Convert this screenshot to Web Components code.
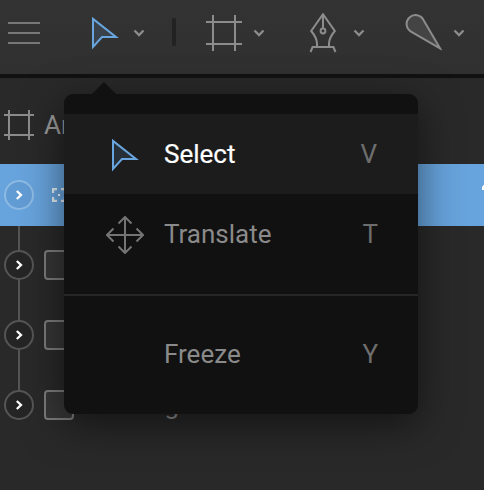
<!DOCTYPE html>
<html lang="en">
<head>
<meta charset="utf-8">
<title>Tools</title>
<style>
html,body{margin:0;height:100%;overflow:hidden;background:#292929}
body{font-family:Roboto,"Liberation Sans",sans-serif;font-size:26px;color:#8d8d8d}
</style>
</head>
<body>
<design-editor></design-editor>
<script>
const icons = {
  menu: [32, 36, '<path d="M0 8H32M0 18H32M0 28H32" stroke="#777"/>'],
  cursor: [28, 36, '<path d="M2 3.9V32L11 22H25Z" fill="#69a5de" fill-opacity=".15" stroke="#69a5de"/>'],
  artboard: [36, 36, '<path d="M7 0V36M29 0V36M0 7H36M0 29H36"/>'],
  smallboard: [30, 30, '<path d="M5 0V30M25 0V30M0 5H30M0 25H30"/>'],
  pen: [28, 40, '<path d="M8 33V30.5C8 26.5 5.5 22 2.2 18L14 1.2L25.800 18C22.500 22 20 26.500 20 30.500V33M1.500 39L3.600 34H24.400L26.500 39M14 2V15.500"/><circle cx="14" cy="18" r="2.400"/>'],
  knife: [38, 40, '<path d="M36 35.300L7 18.600A8.900 8.900 0 1 1 19.500 7Z" fill="#444"/>'],
  move: [38, 38, '<path d="M19 1V37M1 19H37M12.500 7.500L19 1L25.500 7.500M12.500 30.500L19 37L25.500 30.500M7.500 12.500L1 19L7.500 25.500M30.500 12.500L37 19L30.500 25.500" stroke="#747474"/>'],
  down: [12, 8, '<path d="M1.500 1.500L6 6L10.500 1.500" stroke-width="2.300"/>'],
  right: [8, 10, '<path d="M1.800 1L6 5L1.800 9" stroke="#fff" stroke-width="2.300"/>'],
  group: [14, 14, '<path d="M1 5V1H5M9 1H13V5M13 9V13H9M5 13H1V9" stroke="#e4edf5" stroke-width="2.300"/><path d="M6 6H8V8H6Z" fill="#fff" stroke="none"/>'],
  box: [30, 30, '<rect x="1" y="1" width="28" height="28" rx="3" fill="#363636" stroke="#7c7c7c"/>'],
  tag: [10, 14, '<path d="M0 9V6L4 1H10V14H8L6 9Z" fill="#fff" stroke="none"/>']
};
function define(name, css, html) {
  customElements.define(name, class extends HTMLElement {
    connectedCallback() {
      if (this.shadowRoot) return;
      this.attachShadow({mode: 'open'}).innerHTML = '<style>' + css + '</style>' + html;
    }
  });
}
customElements.define('tool-icon', class extends HTMLElement {
  connectedCallback() {
    if (this.shadowRoot) return;
    const [w, h, art] = icons[this.getAttribute('name')];
    this.attachShadow({mode: 'open'}).innerHTML =
      `<style>:host{display:block;flex:none;width:${w}px;height:${h}px}svg{display:block}</style>
       <svg width="${w}" height="${h}" viewBox="0 0 ${w} ${h}" fill="none" stroke="#8c8c8c" stroke-width="2">${art}</svg>`;
  }
});
define('tool-button', ':host{display:flex;align-items:center;flex:none;box-sizing:border-box;width:100px}.down{margin-left:auto}',
  '<slot></slot><tool-icon class="down" name="down"></tool-icon>');
define('tool-bar', `
  :host{display:flex;align-items:center;box-sizing:border-box;height:78px;padding:0 0 8px 8px;background:linear-gradient(#333,#303030);border-bottom:4px solid #111}
  .select{width:54px;margin-left:51px}
  .line{width:4px;height:28px;border-radius:2px;background:#222;margin:-2px 0 0 27px}
  .frame{width:59px;margin-left:30px}.pen{width:56px;margin-left:44px}.knife{width:61px;margin-left:39px}`,
  `<tool-icon name="menu"></tool-icon>
   <tool-button class="select"><tool-icon name="cursor"></tool-icon></tool-button>
   <div class="line"></div>
   <tool-button class="frame"><tool-icon name="artboard"></tool-icon></tool-button>
   <tool-button class="pen"><tool-icon name="pen"></tool-icon></tool-button>
   <tool-button class="knife"><tool-icon name="knife"></tool-icon></tool-button>`);
define('layer-row', `
  :host{display:flex;align-items:center;box-sizing:border-box;height:70px;padding-left:4px}
  :host([selected]){height:62px;margin-bottom:4px;background:#67a3dc;color:#fff}
  .toggle{display:grid;place-items:center;box-sizing:border-box;width:30px;height:30px;border:2px solid #555;border-radius:50%;background:#252525;margin-right:10px;flex:none}
  :host([selected]) .toggle{border-color:#8dbae3;background:#629cd4}
  .name{margin-left:10px;white-space:nowrap}`,
  '<div class="toggle"><tool-icon name="right"></tool-icon></div><slot name="icon"></slot><span class="name"><slot></slot></span>');
define('layer-tree', `
  :host{display:block;padding-top:12px}
  .head{display:flex;align-items:center;height:70px;padding-left:4px;gap:10px;color:#999}
  .rows{padding-top:4px;background:linear-gradient(#555,#555) 18px 35px/2px 210px no-repeat}
  .group{margin-left:8px}`,
  `<div class="head"><tool-icon name="smallboard"></tool-icon><span>Artboard</span></div>
   <div class="rows">
   <layer-row selected><tool-icon slot="icon" class="group" name="group"></tool-icon></layer-row>
   <layer-row><tool-icon slot="icon" name="box"></tool-icon></layer-row>
   <layer-row><tool-icon slot="icon" name="box"></tool-icon></layer-row>
   <layer-row><tool-icon slot="icon" name="box"></tool-icon>Rectangle</layer-row></div>`);
define('menu-item', `
  :host{display:flex;align-items:center;height:80px;padding-right:40px;color:#8a8a8a}
  :host([selected]){background:#1c1c1c;color:#fff;padding-right:41px}
  :host([selected]) .label{-webkit-text-stroke:.2px #fff}
  .icon{display:flex;width:100px;flex:none;padding-top:2px}
  .key{margin-left:auto;color:#6d6d6d}`,
  '<div class="icon"><slot name="icon"></slot></div><span class="label"><slot></slot></span><span class="key"><slot name="key"></slot></span>');
define('tool-menu', `
  :host{display:block;position:absolute;left:64px;top:94px;width:354px;box-sizing:border-box;padding:20px 0;background:#111;border-radius:9px;box-shadow:0 10px 40px #0008}
  :host::before{content:"";position:absolute;left:28px;top:-12px;border:12px solid transparent;border-top:0;border-bottom-color:#111}
  hr{border:0;height:2px;background:#262626;margin:20px 0 18px}
  .cursor{margin-left:47px}.move{margin-left:42px}`,
  `<menu-item selected><tool-icon slot="icon" class="cursor" name="cursor"></tool-icon>Select<span slot="key">V</span></menu-item>
   <menu-item><tool-icon slot="icon" class="move" name="move"></tool-icon>Translate<span slot="key">T</span></menu-item>
   <hr><menu-item>Freeze<span slot="key">Y</span></menu-item>`);
define('design-editor', `
  :host{display:block;position:relative;width:484px;height:490px;overflow:hidden;background:#292929}
  .badge{position:absolute;left:482px;top:181px}`,
  '<tool-bar></tool-bar><layer-tree></layer-tree><tool-icon class="badge" name="tag"></tool-icon><tool-menu></tool-menu>');
</script>
</body>
</html>
